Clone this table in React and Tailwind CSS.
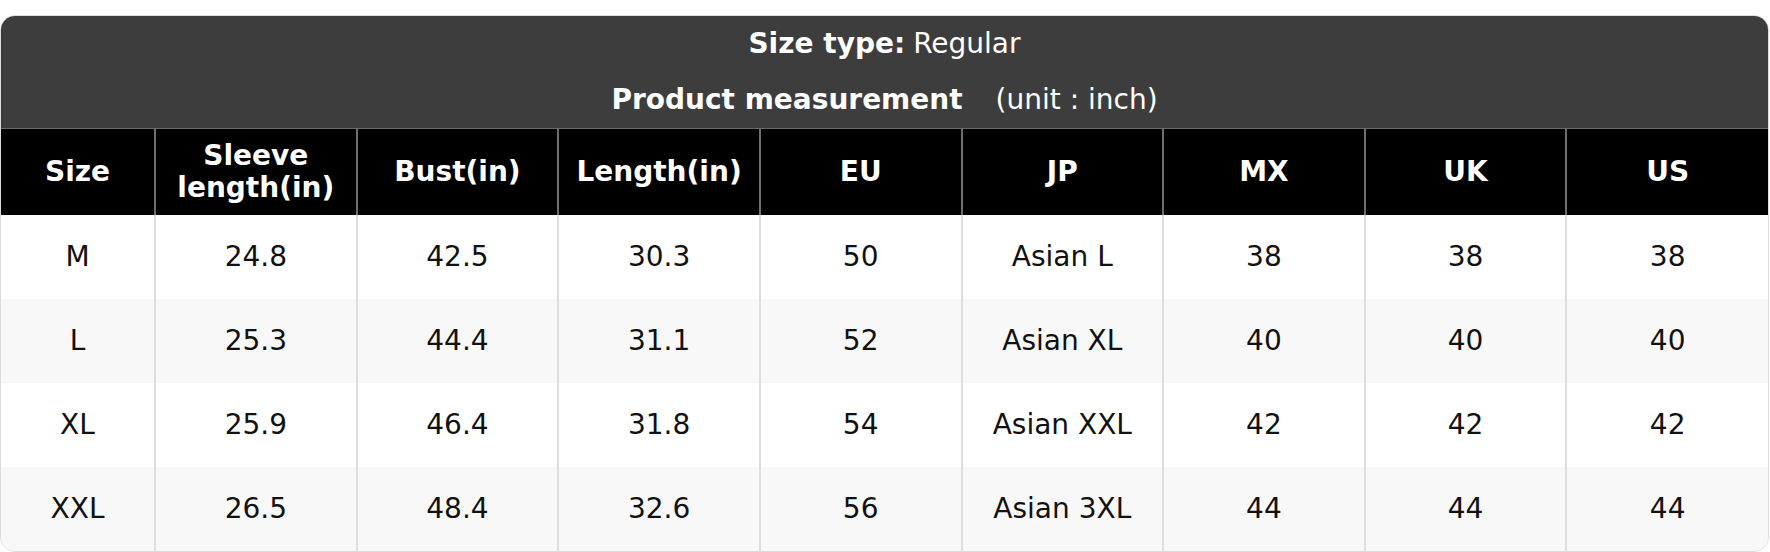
import React from "react";

const columns = ["Size", "Sleeve length(in)", "Bust(in)", "Length(in)", "EU", "JP", "MX", "UK", "US"];

const rows = [
  ["M", "24.8", "42.5", "30.3", "50", "Asian L", "38", "38", "38"],
  ["L", "25.3", "44.4", "31.1", "52", "Asian XL", "40", "40", "40"],
  ["XL", "25.9", "46.4", "31.8", "54", "Asian XXL", "42", "42", "42"],
  ["XXL", "26.5", "48.4", "32.6", "56", "Asian 3XL", "44", "44", "44"],
];

const SizeChart = () => {
  return (
    <div className="w-[1769px] pt-[15px]" style={{ fontFamily: "'DejaVu Sans', sans-serif" }}>
      <div className="rounded-[15px] overflow-hidden border border-[#dcdcdc] bg-white">
        <div className="bg-[#3d3d3d] text-white text-[28px]">
          <div className="h-[56px] flex items-center justify-center">
            <span className="font-bold">Size type:</span>
            <span className="ml-[8px]">Regular</span>
          </div>
          <div className="h-[56px] flex items-center justify-center">
            <span className="font-bold">Product measurement</span>
            <span className="ml-[33px]">(unit : inch)</span>
          </div>
        </div>
        <table className="w-full table-fixed border-collapse text-[28px]">
          <colgroup>
            <col className="w-[154px]" />
            {columns.slice(1).map((c) => (
              <col key={c} />
            ))}
          </colgroup>
          <thead>
            <tr className="bg-black text-white h-[86px] border-t border-[#6b6b6b]">
              {columns.map((c, i) => (
                <th
                  key={c}
                  className={`font-bold leading-[32px] px-1 ${i > 0 ? "border-l-2 border-[#6e6e6e]" : ""}`}
                >
                  {c === "Sleeve length(in)" ? (
                    <>
                      Sleeve
                      <br />
                      length(in)
                    </>
                  ) : (
                    c
                  )}
                </th>
              ))}
            </tr>
          </thead>
          <tbody>
            {rows.map((r, ri) => (
              <tr key={ri} className={`h-[84px] ${ri % 2 === 1 ? "bg-[#f8f8f8]" : "bg-white"}`}>
                {r.map((v, ci) => (
                  <td
                    key={ci}
                    className={`text-center text-[#111] ${ci > 0 ? "border-l-2 border-[#dedede]" : ""}`}
                  >
                    {v}
                  </td>
                ))}
              </tr>
            ))}
          </tbody>
        </table>
      </div>
    </div>
  );
};

export default function App() {
  return <SizeChart />;
}
